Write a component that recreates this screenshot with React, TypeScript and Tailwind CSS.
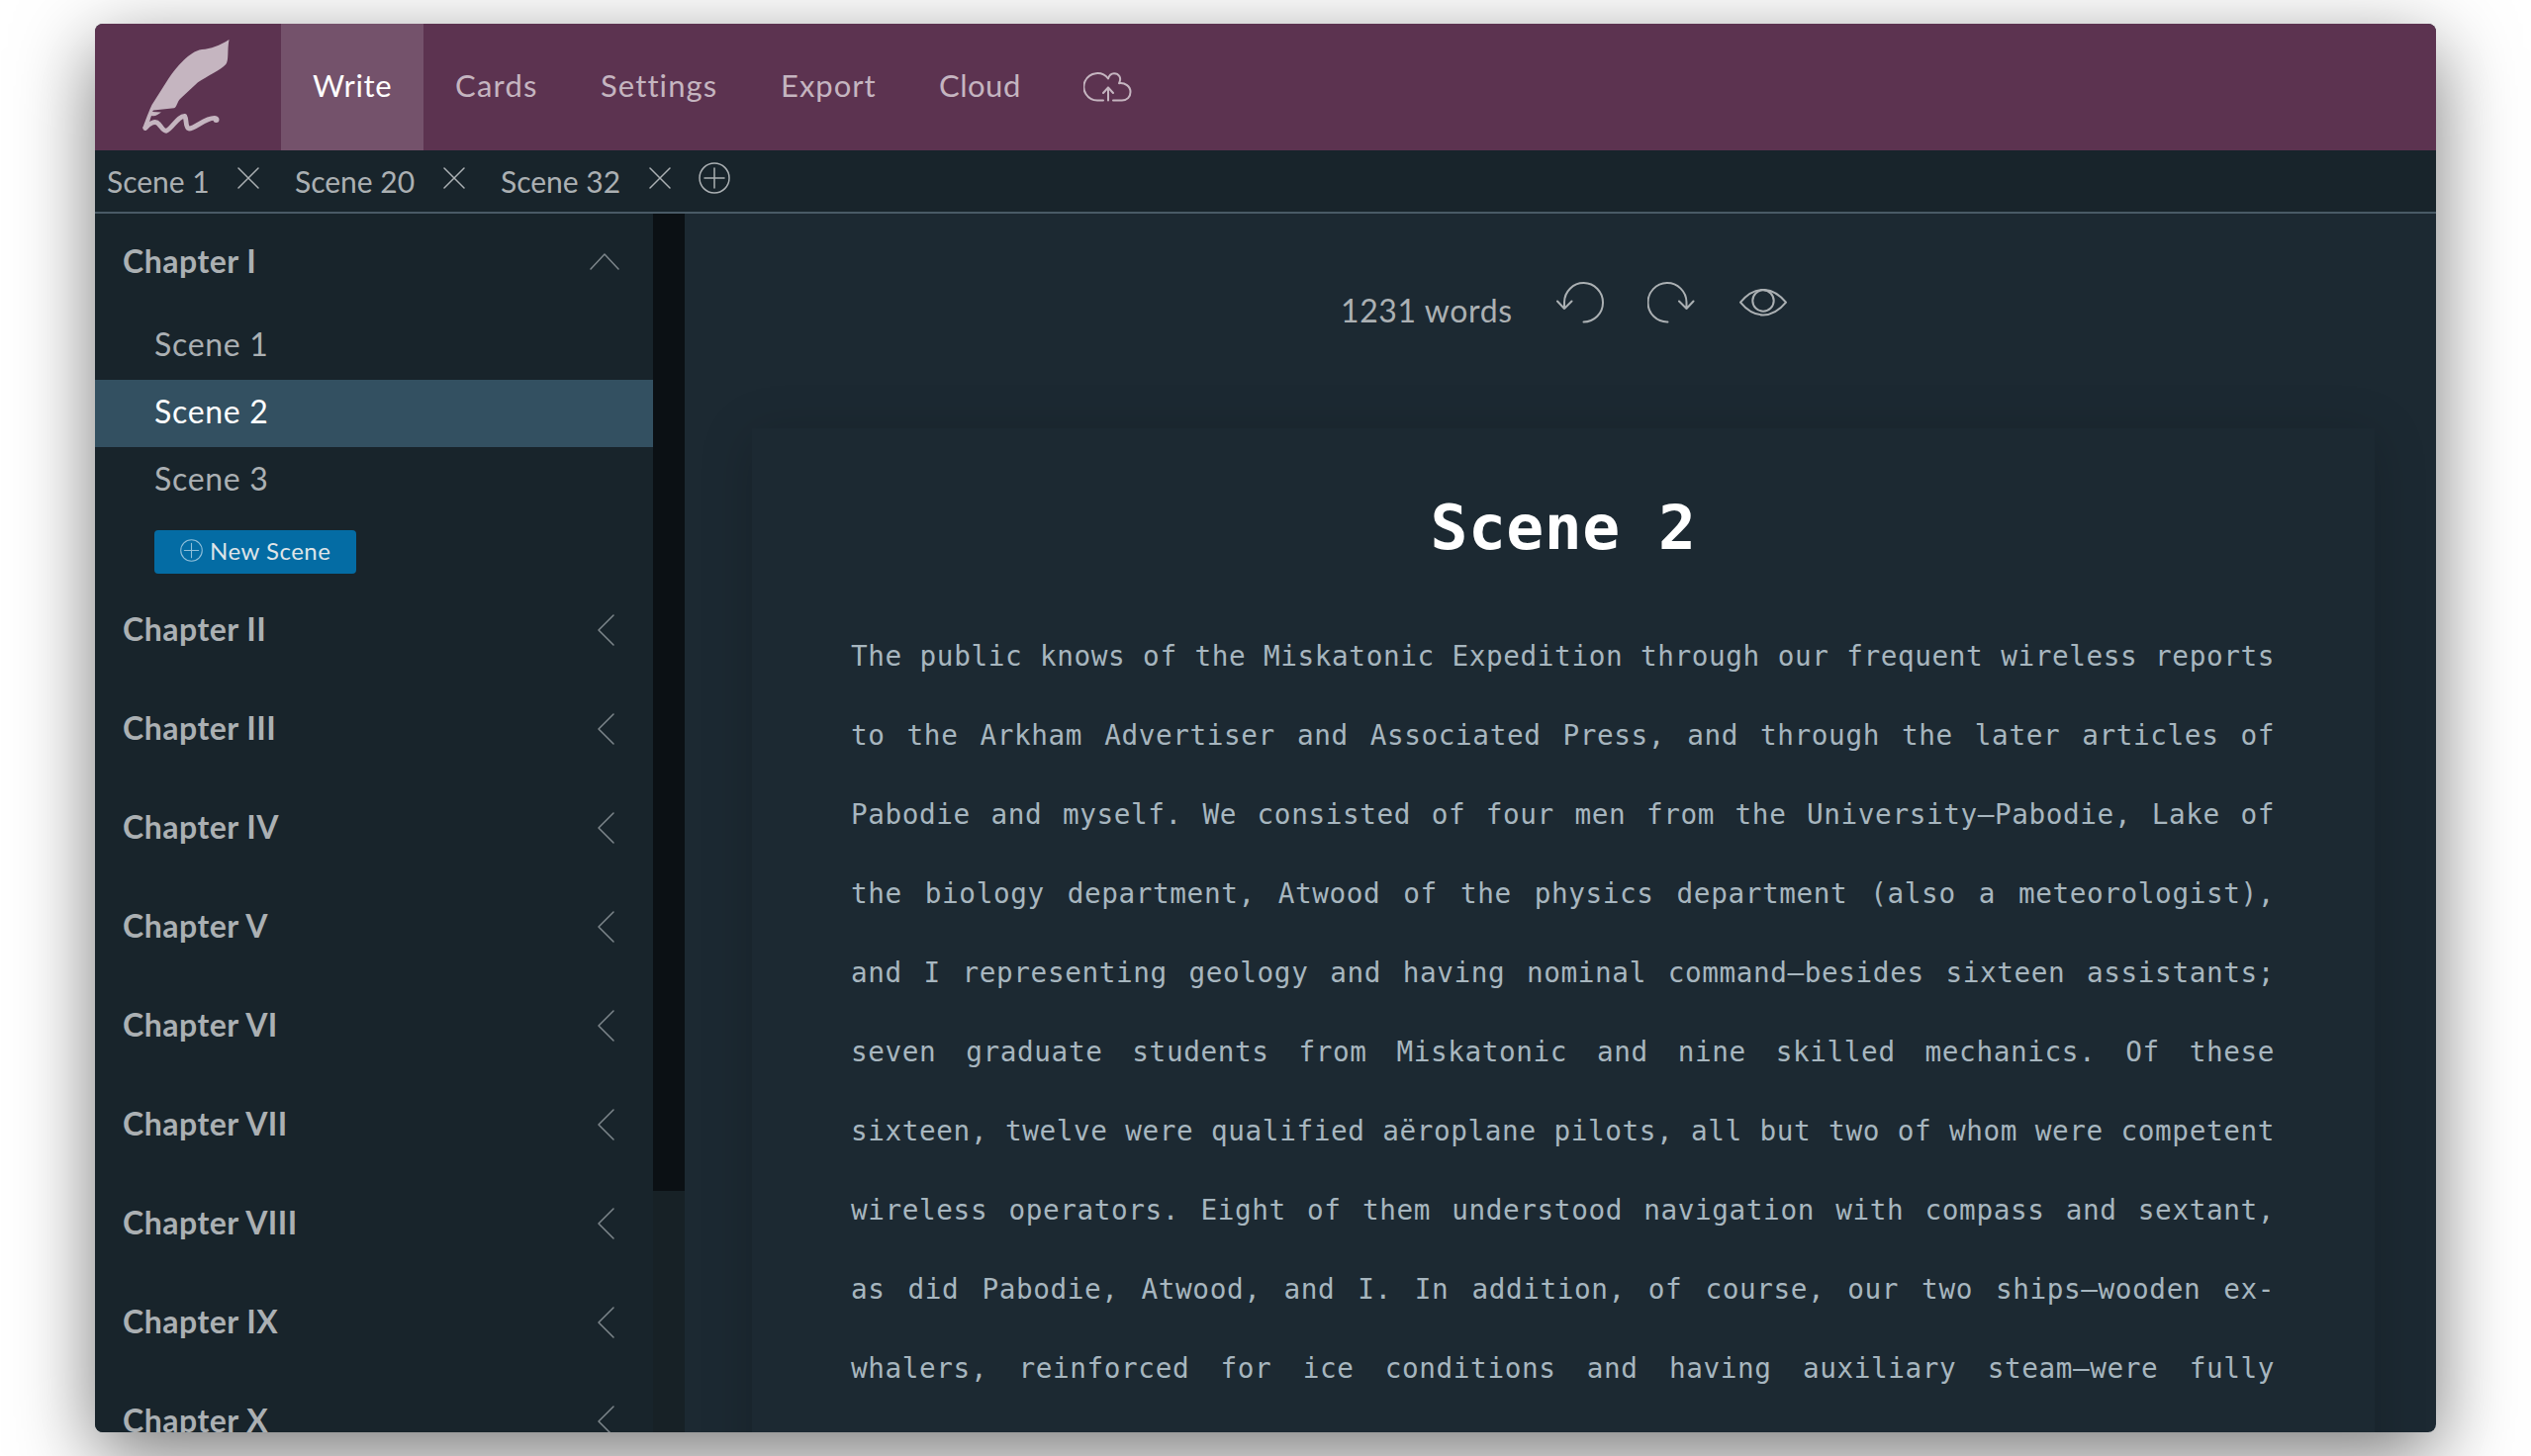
import type { ReactNode } from "react";

const NAV = [
  { label: "Write", box: "w-[144px] bg-[#74526b] text-white", text: "tracking-[0.7px]" },
  { label: "Cards", box: "w-[147px] text-[#c5b5c0]", text: "tracking-[1.2px]" },
  { label: "Settings", box: "w-[182px] text-[#c5b5c0]", text: "tracking-[1.1px]" },
  { label: "Export", box: "w-[160px] text-[#c5b5c0]", text: "tracking-[1px]" },
  { label: "Cloud", box: "w-[146px] text-[#c5b5c0]", text: "tracking-[0.5px]" },
];

const TABS = [
  { label: "Scene 1", box: "w-[132px]" },
  { label: "Scene 20", box: "w-[150px]" },
  { label: "Scene 32", box: "w-[150px]" },
];

const CHAPTERS = ["II", "III", "IV", "V", "VI", "VII", "VIII", "IX", "X"];

const LINES = [
  "The public knows of the Miskatonic Expedition through our frequent wireless reports",
  "to the Arkham Advertiser and Associated Press, and through the later articles of",
  "Pabodie and myself. We consisted of four men from the University—Pabodie, Lake of",
  "the biology department, Atwood of the physics department (also a meteorologist),",
  "and I representing geology and having nominal command—besides sixteen assistants;",
  "seven graduate students from Miskatonic and nine skilled mechanics. Of these",
  "sixteen, twelve were qualified aëroplane pilots, all but two of whom were competent",
  "wireless operators. Eight of them understood navigation with compass and sextant,",
  "as did Pabodie, Atwood, and I. In addition, of course, our two ships—wooden ex-",
  "whalers, reinforced for ice conditions and having auxiliary steam—were fully",
];

function Icon({ className, viewBox, children }: { className: string; viewBox: string; children: ReactNode }) {
  return (
    <svg className={className} viewBox={viewBox} fill="none" stroke="currentColor" strokeLinecap="round" strokeLinejoin="round">
      {children}
    </svg>
  );
}

function Quill() {
  return (
    <svg className="ml-[47px] mt-[15px] h-[98px] w-[90px] shrink-0 text-[#c5b5c0]" viewBox="0 0 90 98">
      <path
        fill="currentColor"
        d="M88.500 1C79 7 70 10.500 61 11C54 12 48 17 43 21.500C36 28 31 35 27 41L10.500 67C8 72 4 83 1.300 90L6 92L9 81L10 78C14 79 17 76.500 20 74.500L11 74L12 72.500L33 70.300C36 69 36 64 39 61L57 44.300C66 38 80 32 85.300 26C88.500 22 86.500 12 88.500 1Z"
      />
      <path d="M3.700 90.500C8 86 14 82 17.500 86.500C20 89 22 93.500 25 93.300C31 91 37 78 43.700 78.300C46 82 44 90 48 91C55 91 65 79 75 80.500" fill="none" stroke="currentColor" strokeWidth="4.800" strokeLinecap="round" strokeLinejoin="round" />
      <circle cx="75.500" cy="82" r="3" fill="currentColor" />
    </svg>
  );
}

function PlusCircle({ className }: { className: string }) {
  return (
    <Icon className={className} viewBox="0 0 32 32">
      <circle cx="16" cy="16" r="15" />
      <path d="M6 16H26M16 6V26" />
    </Icon>
  );
}

export default function App() {
  return (
    <div className="h-[1472px] w-[2558px] overflow-hidden bg-white px-[96px] pt-6 font-['Lato',sans-serif]">
      <div className="h-[1424px] w-[2366px] rounded-lg shadow-[0_24px_80px_rgba(0,0,0,0.53)]">
        <div className="flex h-full flex-col overflow-hidden rounded-lg bg-[#1c2932]">
          <header className="flex h-32 shrink-0 bg-[#5c3350] text-[31px]">
            <div className="w-[188px]"><Quill /></div>
            {NAV.map((n) => (
              <div key={n.label} className={`flex items-center whitespace-nowrap pb-[3px] pl-8 ${n.box}`}>
                <span className={n.text}>{n.label}</span>
              </div>
            ))}
            <div className="flex items-center pl-8 text-[#c5b5c0]">
              <Icon className="h-[30px] w-[49px]" viewBox="0 0 49 30">
                <path strokeWidth="2" d="M20 28.500H14.500A13.700 13.700 0 1 1 25 6.500M25 6.500C26 3 28 1.200 31 1.200C35.500 1.200 39 5.500 36 11.200C42 10.500 47.500 14 47.500 20C47.500 25 44 28.500 39 28.500H30M25 28.500V15.500M20 21L25 15.500L30 21" />
              </Icon>
            </div>
          </header>

          <div className="flex h-16 shrink-0 border-b-2 border-[#495a66] bg-[#18242b] pl-3 text-[30px] text-[#abb0b3]">
            {TABS.map((t) => (
              <div key={t.label} className="mr-9 flex pt-[12px] leading-[38px]">
                <span className={`whitespace-nowrap ${t.box}`}>{t.label}</span>
                <Icon className="mt-[5px] h-[22px] w-[22px]" viewBox="0 0 22 22">
                  <path strokeWidth="1.500" d="M1 1L21 21M21 1L1 21" />
                </Icon>
              </div>
            ))}
            <PlusCircle className="-ml-2 mt-[12px] h-8 w-8 [stroke-width:1.5]" />
          </div>

          <div className="flex min-h-0 flex-1">
            <aside className="w-[564px] shrink-0 overflow-hidden bg-[#18242b] text-[32px] text-[#abb0b3]">
              <div className="flex h-24 items-center justify-between pl-7 pr-[34px] font-bold">
                <span className="tracking-[0.5px]">Chapter I</span>
                <Icon className="h-[18px] w-[30px] text-[#7d868b]" viewBox="0 0 30 18">
                  <path strokeWidth="1.500" d="M1 17L15 2L29 17" />
                </Icon>
              </div>
              <div className="mt-1 flex h-[68px] items-center pb-1 pl-[60px] tracking-[0.7px]">Scene 1</div>
              <div className="flex h-[68px] items-center bg-[#335061] pb-1 pl-[60px] tracking-[0.7px] text-white">Scene 2</div>
              <div className="flex h-[68px] items-center pb-1 pl-[60px] tracking-[0.7px]">Scene 3</div>
              <div className="ml-[60px] mt-4 flex h-11 w-[204px] items-center rounded bg-[#046ca4] pl-[26px] text-[24px] text-[#dfe4e8]">
                <PlusCircle className="mb-1 mr-[7px] h-[23px] w-[23px] text-[#8fbfda] [stroke-width:1.5]" />
                <span className="whitespace-nowrap pb-0.5 tracking-[0.5px]">New Scene</span>
              </div>
              <div className="h-[7px]" />
              {CHAPTERS.map((c) => (
                <div key={c} className="flex h-[100px] items-center justify-between pl-7 pr-[39px] font-bold">
                  <span className="pb-[3px] tracking-[0.5px]">Chapter {c}</span>
                  <Icon className="h-8 w-[18px] text-[#7d868b]" viewBox="0 0 18 32">
                    <path strokeWidth="1.500" d="M17 1L2 16L17 31" />
                  </Icon>
                </div>
              ))}
            </aside>
            <div className="w-8 shrink-0 bg-[#172126]">
              <div className="h-[988px] bg-[#0b1014]" />
            </div>

            <main className="flex-1 overflow-hidden pl-[68px]">
              <div className="flex h-[217px] pl-[595px] text-[#abb0b3]">
                <span className="mt-[78px] w-[219px] whitespace-nowrap text-[32px] leading-[40px] tracking-[0.6px]">1231 words</span>
                <Icon className="-ml-px mt-[69px] h-[42px] w-[48px]" viewBox="0 0 48 42">
                  <path strokeWidth="2" d="M27.500 40.500A19.500 19.700 0 1 0 8 20.500V27M1 19.500L8 27L15.500 19.500" />
                </Icon>
                <Icon className="ml-[44px] mt-[69px] h-[42px] w-[48px]" viewBox="0 0 48 42">
                  <path strokeWidth="2" d="M20.500 40.500A19.500 19.700 0 1 1 39.500 20.500V27M32 19.500L39.500 27L46.500 19.500" />
                </Icon>
                <Icon className="ml-[45px] mt-[76px] h-[28px] w-[48px]" viewBox="0 0 48 28">
                  <path strokeWidth="2" d="M1 13.700C15 -3.300 33 -3.300 47 13.700C33 30.700 15 30.700 1 13.700Z" />
                  <circle cx="24" cy="12" r="10.700" strokeWidth="2" />
                </Icon>
              </div>
              <article className="h-[1200px] w-[1640px] px-[100px] pt-[61px] font-['DejaVu_Sans_Mono',monospace] shadow-[0_8px_50px_rgba(0,0,0,0.18)]">
                <h1 className="text-center text-[63px] font-bold leading-[80px] tracking-[0.5px] text-white">Scene 2</h1>
                <div className="mr-px mt-[50px] text-[27.7px] leading-[80px] tracking-[0.6px] text-[#a7b6bf]">
                  {LINES.map((l) => (
                    <p key={l} className="text-justify [text-align-last:justify]">{l}</p>
                  ))}
                </div>
              </article>
            </main>
          </div>
        </div>
      </div>
    </div>
  );
}
